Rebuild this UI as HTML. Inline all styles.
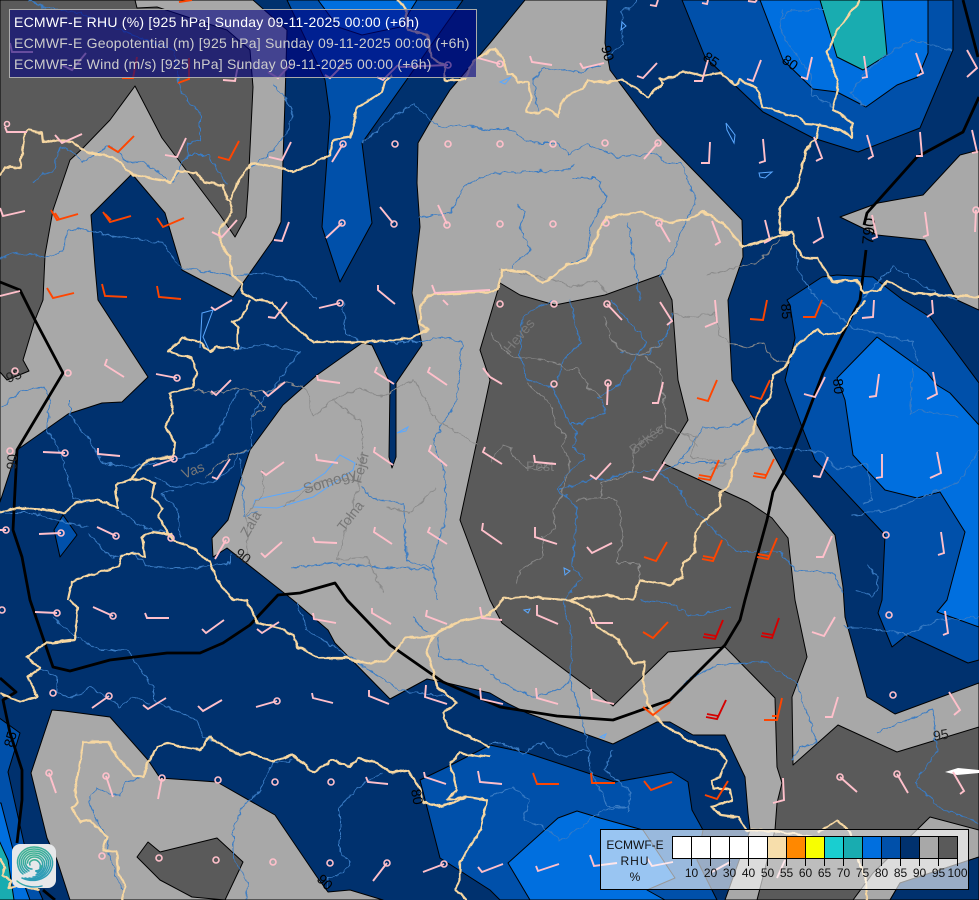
<!DOCTYPE html>
<html><head><meta charset="utf-8"><title>ECMWF-E RHU</title>
<style>
html,body{margin:0;padding:0;background:#00316e;width:979px;height:900px;overflow:hidden}
svg{display:block;position:absolute;left:0;top:0}
text{font-family:"Liberation Sans",sans-serif}
</style></head><body>
<svg width="979" height="900" viewBox="0 0 979 900" xmlns="http://www.w3.org/2000/svg">
<defs>
<filter id="w1" filterUnits="userSpaceOnUse" x="0" y="0" width="979" height="900" color-interpolation-filters="sRGB"><feTurbulence type="fractalNoise" baseFrequency="0.14" numOctaves="2" seed="4"/><feDisplacementMap in="SourceGraphic" scale="6" xChannelSelector="R" yChannelSelector="G"/></filter>
<filter id="w2" filterUnits="userSpaceOnUse" x="0" y="0" width="979" height="900" color-interpolation-filters="sRGB"><feTurbulence type="fractalNoise" baseFrequency="0.12" numOctaves="2" seed="9"/><feDisplacementMap in="SourceGraphic" scale="4" xChannelSelector="R" yChannelSelector="G"/></filter>
<linearGradient id="lg" x1="0" y1="0" x2="0.3" y2="1"><stop offset="0" stop-color="#3fb38e"/><stop offset="1" stop-color="#2d9cb6"/></linearGradient>
</defs>
<rect width="979" height="900" fill="#00316e"/>
<!-- shaded regions -->
<g stroke="#000" stroke-width="1" stroke-linejoin="round">
<polygon fill="#a8a8a8" points="0,502 17,450 68,414 102,403 122,402 148,377 98,300 95,267 91,215 132,174 165,213 182,270 233,297 273,240 281,222 285,100 287,30 253,0 0,0"/>
<polygon fill="#5a5a5a" points="0,0 135,0 137,8 157,7 227,30 250,50 253,87 248,190 246,217 235,237 220,215 162,138 135,86 110,120 83,148 70,160 53,210 45,255 43,300 35,320 23,360 29,371 7,380 0,372"/>
<polygon fill="#a8a8a8" points="525,0 607,0 605,43 610,70 657,133 742,220 743,257 728,300 732,380 753,417 783,472 835,535 843,587 845,617 867,697 895,714 979,683 979,740 790,780 775,900 725,900 750,830 748,813 745,777 725,735 693,735 670,722 657,722 613,744 527,713 507,703 490,693 447,683 427,679 390,699 335,643 328,630 293,600 227,548 213,557 212,538 228,520 240,480 250,450 283,405 317,375 362,343 372,345 390,383 389,457 392,468 396,457 396,383 422,345 412,293 420,227 417,183 418,143 433,117 450,90 490,43"/>
<polygon fill="#5a5a5a" points="500,283 520,295 555,305 605,295 660,275 672,300 678,380 688,420 662,463 748,502 772,518 788,538 795,600 807,657 792,697 793,765 838,725 897,752 979,727 979,900 757,900 775,830 777,803 782,783 777,767 775,698 725,647 668,652 613,706 502,623 490,600 460,520 490,380 480,350"/>
<polygon fill="#a8a8a8" points="930,817 979,830 979,857 900,883 890,900 853,900 873,873"/>
<polygon fill="#00316e" points="979,857 900,883 890,900 979,900"/>
<polygon fill="#a8a8a8" points="840,217 878,203 923,195 960,155 979,150 979,310 957,300 925,240 877,235"/>
<polygon fill="#a8a8a8" points="52,710 64,711 110,717 148,760 160,778 217,782 275,815 317,877 328,892 350,890 383,900 70,900 57,860 47,838 31,773"/>
<polygon fill="#5a5a5a" points="137,857 148,842 160,852 217,838 243,862 225,900 192,897 160,880"/>
<polygon fill="#0050aa" points="63,515 77,535 60,557 54,530"/>
<polygon fill="#0050aa" points="287,0 325,80 330,117 322,227 340,282 372,223 362,143 463,0"/>
<polygon fill="#006fdf" points="318,0 338,27 362,35 400,27 417,0"/>
<polygon fill="#0050aa" points="682,0 705,57 763,112 813,138 858,152 920,128 953,50 953,0"/>
<polygon fill="#006fdf" points="760,0 783,60 813,89 837,92 866,107 897,85 918,77 928,53 928,0"/>
<polygon fill="#19acb0" points="820,0 837,57 863,70 887,55 882,0"/>
<polygon fill="#0050aa" points="787,300 822,277 837,275 873,277 903,300 930,317 979,383 979,660 968,663 907,635 892,647 878,613 882,600 885,535 815,460 802,427 785,380 795,338 790,305"/>
<polygon fill="#006fdf" points="837,378 877,337 927,373 937,385 950,393 979,425 979,627 937,612 947,600 965,532 940,492 917,498 885,490 853,455 845,400"/>
<polygon fill="#0050aa" points="490,745 527,753 615,782 672,772 688,782 692,810 703,830 697,860 717,900 500,900 490,890 440,858 420,780 447,767"/>
<polygon fill="#006fdf" points="508,863 558,818 577,811 600,818 643,830 675,878 647,890 665,900 530,900"/>
<polygon fill="#0050aa" points="-2,717 20,733 8,772 30,870 43,900 -2,900"/>
<polygon fill="#006fdf" points="-2,803 1,803 17,865 30,900 -2,900"/>
<polygon fill="#19acb0" points="-2,838 8,860 14,900 -2,900"/>
</g>
<polygon fill="#fff" points="945,772 958,768 979,770 979,773 957,775"/>
<!-- rivers -->
<g fill="none" stroke="#3a7cc4" stroke-width="1" stroke-linejoin="round" filter="url(#w1)">
<polyline points="0,258 15,253 45,257 63,252 67,233 77,228 117,237 163,243 180,268 230,275 267,273 300,283 317,300"/>
<polyline points="32,183 43,172 53,173 60,147 70,150 83,162 110,145 130,163 143,162 173,182 187,155 208,155 227,185"/>
<polyline points="28,0 43,7 80,13 127,33 173,50 180,87 188,100 200,113 200,140 188,143 187,157"/>
<polyline points="273,83 293,110 287,133 267,157 250,167"/>
<polyline points="362,143 390,120 413,103 425,115 440,127 460,125 490,130 507,128 525,140 540,143 560,143 568,155 587,144 618,157 657,153 667,163 680,163 697,200 690,213 670,257 660,277"/>
<polyline points="417,217 450,213 463,187 490,173 527,172 570,170 573,163"/>
<polyline points="573,178 595,178 607,197 590,227 587,257 567,265"/>
<polyline points="517,205 525,213 520,227 530,250 510,267"/>
<polyline points="628,223 637,277 640,300"/>
<polyline points="638,0 622,13 623,43 607,57"/>
<polyline points="538,110 533,80 543,68 583,72 600,65"/>
<polyline points="952,50 912,40 883,57 862,77 850,93 866,107"/>
<polyline points="783,10 780,27 787,43 810,73 812,95 833,107"/>
<polyline points="823,10 790,10 782,20"/>
<polyline points="863,297 893,267 930,290 957,300"/>
<polyline points="797,247 797,270 818,300"/>
<polyline points="3,407 20,390 43,387 50,400 47,430 58,447 65,467 73,497 93,503"/>
<polyline points="70,400 70,415 87,437 103,463 132,467 177,460 213,443 233,400 238,390"/>
<polyline points="233,350 267,345 300,352 277,383 260,403 252,415 252,447"/>
<polyline points="343,300 345,333 362,342 420,342 443,337 462,343 457,400 433,440 443,467 447,513 433,560 437,600"/>
<polyline points="155,477 170,487 213,482 230,470 240,453 250,450"/>
<polyline points="240,460 245,517 257,510"/>
<polyline points="290,568 333,563 377,567 430,570"/>
<polyline points="360,487 377,500 403,503 407,560 433,570"/>
<polyline points="117,510 143,527 167,533"/>
<polyline points="87,533 110,557 133,553 150,567 200,568 230,563 230,553"/>
<polyline points="0,513 33,513 57,520 87,527"/>
<polyline points="173,490 160,493 178,510 180,537"/>
<polyline points="552,300 522,317 520,357 527,380 553,387 563,410 570,423 580,423 605,413 603,400 597,397 620,385 637,355 647,343 610,300"/>
<polyline points="570,300 580,343 563,360 557,380"/>
<polyline points="620,352 647,355 667,335 672,313"/>
<polyline points="570,423 577,433 573,447 585,458 568,473 558,490 577,507 572,567 582,577 565,600"/>
<polyline points="592,478 560,490"/>
<polyline points="592,478 607,480 623,473 665,470 680,463 723,463 737,452 760,450"/>
<polyline points="677,465 703,428 730,427 752,417"/>
<polyline points="660,473 677,487 690,507 707,523 737,552 780,552 795,570 833,573 843,593"/>
<polyline points="740,450 780,448 823,452 837,470 867,463 872,500 862,503"/>
<polyline points="853,515 890,510 957,483 979,450"/>
<polyline points="913,367 910,413 920,410 957,417"/>
<polyline points="820,300 853,328 913,342 918,362"/>
<polyline points="867,565 878,577 877,590 872,597 857,590"/>
<polyline points="490,675 513,688 535,697 562,688 570,680"/>
<polyline points="563,600 572,637 570,680 577,703 587,740 590,770 608,807 628,807"/>
<polyline points="613,750 605,770 630,792 628,813"/>
<polyline points="640,600 670,603 693,617 730,607"/>
<polyline points="677,693 687,680 717,665 763,662 797,683 817,743 800,747 792,760"/>
<polyline points="877,732 933,710 937,750 915,782 938,807 979,823"/>
<polyline points="843,627 883,630 907,635 937,620 979,617"/>
<polyline points="490,797 513,787 530,800 523,820 543,827 560,840 577,830 603,810 628,807"/>
<polyline points="490,743 503,743 523,753 543,742 560,757 587,750"/>
<polyline points="53,617 73,635 100,650 127,650 153,687 153,700 197,720 203,737 213,740"/>
<polyline points="40,668 57,677 57,693 70,698 90,688 107,697 120,707 135,697 150,703"/>
<polyline points="143,777 125,782 120,797 97,788 88,800 100,827 108,840 107,850 117,877 123,890"/>
<polyline points="293,760 273,763 260,790 243,807 233,830 233,857 248,883 245,900"/>
<polyline points="383,773 357,788 340,807 340,853 350,863 343,873 328,877 327,890"/>
<polyline points="297,603 307,630 350,657 400,690 447,697"/>
<polyline points="412,617 427,633"/>
<polyline points="437,637 440,657 467,663 490,670"/>
</g>
<!-- lakes -->
<g fill="none" stroke="#5aa8ff" stroke-width="1">
<polygon points="255,500 267,497 300,490 325,473 340,455 355,463 353,470 313,497 277,508 253,507"/>
<polyline points="200,348 202,313 213,310 203,337 210,352"/>
<polygon points="726,123 735,135 734,143 727,130"/>
<polygon points="759,173 772,172 765,178 760,177"/>
<polygon points="500,82 511,77 505,84"/>
<polygon points="622,22 626,26 621,30"/>
<polygon points="564,568 570,571 565,575"/>
<polygon points="524,610 530,609 528,613"/>
<polygon points="600,737 606,734 604,738"/>
<polygon points="397,433 408,427 406,431"/>
</g>
<!-- admin boundaries -->
<g fill="none" stroke="#8a8a8a" stroke-width="1" stroke-linejoin="round" filter="url(#w1)">
<polyline points="193,390 213,393 237,388 267,392 283,383 307,388 313,417 333,400 362,423 362,450"/>
<polyline points="250,392 265,408 253,415"/>
<polyline points="333,400 360,388 380,397 413,380 437,420 477,445"/>
<polyline points="247,450 230,455 205,477"/>
<polyline points="263,470 263,493 247,513 248,563"/>
<polyline points="283,507 323,480 360,480 363,453"/>
<polyline points="360,480 343,540 337,560 367,557 383,593"/>
<polyline points="437,487 410,513 387,507"/>
<polyline points="490,333 510,357 540,360 555,363 567,370 577,367 588,387 603,397"/>
<polyline points="605,317 612,340 623,352 640,355 663,343"/>
<polyline points="645,357 660,370 667,427 690,437 697,447"/>
<polyline points="527,383 553,407 555,425 567,437 562,447 570,463 568,477 560,497 553,510 555,530 543,537 543,557 520,570 517,583"/>
<polyline points="490,463 503,445 510,447 515,460 533,470 553,463"/>
<polyline points="577,500 600,497 618,500 623,537 617,563 640,563 640,580"/>
<polyline points="600,497 602,483 633,473"/>
<polyline points="633,473 633,460 635,447 663,427"/>
<polyline points="673,313 690,317 715,313 720,337 730,343 743,348 763,343 773,360 787,363"/>
<polyline points="682,433 697,437 690,457 727,463 710,470"/>
<polyline points="707,275 757,263 780,240"/>
<polyline points="500,270 540,277 562,283 573,287 597,280 607,293"/>
</g>
<!-- region names -->
<g fill="#777" font-size="14">
<text transform="translate(305,494) rotate(-17)" font-size="15">Somogy</text>
<text transform="translate(361,484) rotate(-75)">Fejér</text>
<text transform="translate(344,532) rotate(-52)">Tolna</text>
<text transform="translate(248,538) rotate(-60)">Zala</text>
<text transform="translate(184,479) rotate(-22)">Vas</text>
<text transform="translate(634,455) rotate(-38)" fill="#7a7a7a">Békés</text>
<text transform="translate(526,471)" fill="#7a7a7a">Pest</text>
<text transform="translate(510,354) rotate(-50)" fill="#7a7a7a">Heves</text>
</g>
<!-- thick geopotential lines -->
<g fill="none" stroke="#000" stroke-width="2.8" stroke-linejoin="round">
<polyline points="979,97 963,132 917,157 867,213 864,225"/>
<polyline points="866,250 860,300 823,373 802,428 785,470 773,492 767,520 745,600 740,620 725,645 670,700 613,720 557,716 500,707 443,682 390,645 347,600 335,583 300,593 278,595 250,625 223,643 200,653 167,653 110,660 70,671 53,667 30,600 22,557 13,530 17,450 63,373 35,320 20,290 0,282"/>
<polyline points="0,678 16,692 3,700 10,733 22,770 22,800 17,843"/>
<polyline points="43,890 55,900"/>
<polyline points="963,0 978,57"/>
</g>
<!-- borders -->
<g fill="none" stroke="#f6d7a2" stroke-width="2.2" stroke-linejoin="round" filter="url(#w2)">
<polyline points="0,175 5,167 20,168 25,133 28,130 42,133 43,143 55,140 72,142 88,153 113,157 133,175 170,182 178,171 197,173 203,182 223,185 227,200 230,202 232,213 220,230 220,243 230,257 232,275 242,283 242,293 257,300 272,302 287,320 313,342 350,342 367,342 413,338 428,330 420,323 420,307 428,295 490,292 497,290 503,270 527,272 543,283 567,265 587,260 598,233 607,217 640,212 657,218 670,223 687,220 703,212 723,223 743,247 792,232 780,233 780,207 798,187 802,163 808,147 815,140 820,125"/>
<polyline points="230,200 238,182 252,163 283,168 292,172 315,163 330,155 333,140 350,137 355,120 357,107 382,92 385,82 392,75"/>
<polyline points="397,0 405,7 408,30 427,35 432,58 445,65 445,80 465,80 473,62 490,50 495,48 502,58 507,74 513,74 518,82 528,82 531,100 526,113 538,114 547,108 558,117 562,102 568,95 583,88 587,80 607,83 622,79 648,97 663,83 660,78 673,78 683,71 703,76 720,73 735,85 740,80 757,88 763,107 783,113 800,118 805,124 820,125 840,130 852,137 852,123 837,112 833,110 838,90 835,73 827,52 838,30 860,0"/>
<polyline points="792,232 795,243 803,258 818,258 832,282 857,280 863,293 880,290 887,280 910,293 979,297"/>
<polyline points="865,300 857,310 840,333 823,335 817,330 800,342 790,357 785,367 773,375 770,397 757,413 753,433 737,457 728,487 720,493 720,507 703,522 695,533 695,553 683,563 682,577 670,585 640,580 633,600 620,598 607,595 567,600 523,597 503,598 490,615 455,623 430,637 407,638 387,660 367,663 347,658 320,658 297,647 293,635 280,628 257,623 247,600 233,600 217,580 210,562 188,545 172,540 158,517 163,508 152,497 155,483 143,478 130,480 115,485 118,508 100,500 77,502 63,513 50,510 17,508 0,513"/>
<polyline points="130,480 147,460 173,457 175,443 165,427 173,413 170,393 192,387 197,372 192,358 168,352 182,338 200,342 210,352 217,347 238,348 238,328 233,322 242,317 250,300"/>
<polyline points="570,600 590,610 597,627 618,640 633,663 645,662 643,680 647,703 663,725 680,735 697,745 717,750 727,760 720,777 712,780 713,788 730,790 732,800 712,807 720,815 738,817 747,830 783,832 818,838"/>
<polyline points="818,833 837,820 850,832 866,883 867,900"/>
<polyline points="68,600 72,582 90,575 118,567 122,555 132,553 145,557 142,537 153,532 172,535"/>
<polyline points="70,600 78,608 75,640 47,643 27,657 33,663 40,668 28,677 37,697 20,702 0,693"/>
<polyline points="210,735 200,750 167,743 157,747 148,763 143,777 133,775 117,757 108,742 83,742 80,763 75,790 78,802 72,808 80,822 90,820 107,837 103,850 117,852 118,872 125,885 122,900"/>
<polyline points="210,735 213,740 240,755 250,752 273,762 293,755 313,772 333,760 350,767 358,758 377,763 390,773 408,770 420,790 423,802 443,807 467,797 487,800 480,830 460,863 460,880 455,890 467,900"/>
<polyline points="490,747 460,733 447,727 443,713 457,703 447,695 437,687 427,650 433,637"/>
<polyline points="490,757 460,753 450,763 457,790 447,800 467,797"/>
<polyline points="0,858 6,868 3,875 11,880 8,888 22,886 40,890"/>
</g>
<!-- contour labels -->
<g fill="#000" font-size="14">
<text transform="translate(601,47) rotate(75)">90</text>
<text transform="translate(702,59) rotate(35)">85</text>
<text transform="translate(781,62) rotate(35)">80</text>
<text transform="translate(873,245) rotate(-85)" font-size="16">790</text>
<text transform="translate(781,304) rotate(85)">85</text>
<text transform="translate(833,379) rotate(85)">80</text>
<text transform="translate(8,383) rotate(-20)" fill="#222">95</text>
<text transform="translate(16,470) rotate(-85)" fill="#222">90</text>
<text transform="translate(234,555) rotate(38)" fill="#222">90</text>
<text transform="translate(934,741) rotate(-10)" fill="#222">95</text>
<text transform="translate(13,748) rotate(-75)">85</text>
<text transform="translate(411,790) rotate(80)">80</text>
<text transform="translate(316,880) rotate(45)">90</text>
</g>
<!-- wind barbs pink -->
<path fill="none" stroke="#ffc0cb" stroke-width="1.9" d="M0 296L20 291M5 127L7 132L27 132M55 135L62 143L82 134M165 155L177 157L186 138M269 157L282 160L291 142M343 144L332 162M380 207L393 223M438 205L447 224M342 223L326 238M274 240L282 241L289 222M212 232L222 237L237 220M0 208L3 216L25 211M378 285L378 290L390 300M432 285L435 293L490 290M10 43L12 52L33 52M62 65L72 70L86 53M223 80L235 81L239 60M268 72L278 78L292 63M325 75L330 78L345 63M377 77L383 80L398 65M400 67L448 65M478 58L500 64M530 56L532 62L552 65M580 63L583 68L604 63M637 76L643 78L657 63M694 81L702 81L708 60M747 79L753 81L761 60M801 77L807 79L812 57M862 78L867 77L864 56M917 76L923 73L916 53M967 77L977 68L967 50M650 5L656 6L658 0M702 3L707 4L708 0M748 1L755 2L757 0M658 143L644 159M701 163L709 163L710 142M759 163L765 161L763 139M816 161L822 158L814 137M867 135L873 156L868 159M920 132L922 156L916 156M972 130L977 152L972 153M659 223L670 242M712 221L720 242L715 245M765 220L770 240L764 243M818 217L823 237L813 243M872 215L877 237L872 239M925 212L928 235L923 237M976 210L975 232M211 307L215 310L232 300M268 317L275 318L287 302M340 303L319 308M390 300L395 304M443 300L448 305M107 359L105 365L124 377M177 378L156 374M211 391L216 395L231 380M263 391L268 396L285 382M317 375L318 380L340 383M377 367L375 372L394 384M430 367L428 372L447 385M483 368L490 377L502 384M65 453L43 452M98 448L98 454L120 456M174 459L153 466M212 477L217 479L230 459M261 471L266 475L284 462M316 454L317 460L338 463M375 447L374 452L393 465M431 445L429 451L447 466M485 447L483 452L502 464M0 530L6 530M61 533L39 534M116 536L97 527M226 540L215 559M261 553L265 557L282 542M313 537L315 542L337 543M375 527L374 532L392 544M430 527L428 532L447 544M483 523L482 530L502 544M607 304L622 320M660 302L672 321L667 325M715 300L717 322L705 327M874 300L873 317L862 318M932 300L933 313L927 317M608 383L607 405M663 382L658 403L652 403M825 377L815 397L804 394M879 374L876 396L869 397M933 372L937 394L927 399M534 455L535 462L556 464M590 475L596 479L611 463M643 477L653 480L665 462M813 476L820 477L828 457M882 454L882 477L876 478M937 452L941 473L930 478M535 527L535 537L557 544M587 547L592 553L612 543M816 557L823 557L832 536M941 532L944 553L938 555M57 613L35 612M113 616L93 607M145 613L147 618L169 618M202 629L206 633L224 620M257 629L262 633L279 622M313 613L314 619L336 623M372 608L372 613L391 624M427 610L426 616L447 624M480 607L482 618L502 620M109 696L92 708M143 705L148 709L166 698M198 706L203 711L222 700M277 701L256 707M312 693L313 698L333 703M369 690L369 696L389 704M426 685L425 697L447 704M480 688L481 699L503 704M49 773L56 793M106 776L113 797M162 778L158 799M366 777L368 782L388 784M424 772L425 777L446 784M478 771L480 782L502 784M387 863L373 881M444 864L423 872M478 867L482 872L503 864M537 605L537 615L558 624M590 617L592 623L613 623M812 632L824 636L835 617M945 611L948 633L943 635M949 692L960 710L954 715M838 697L832 717L825 717M536 688L537 698L558 704M591 689L592 699L614 704M840 777L857 792M897 774L908 793M953 772L964 791L960 794M783 778L784 800L773 803M590 855L594 866L617 863M536 866L538 871L559 864M647 858L652 866L673 862M712 872L730 862M777 878L785 860"/>
<g fill="none" stroke="#ffc0cb" stroke-width="1.6">
<circle cx="7" cy="124" r="2.5"/><circle cx="343" cy="144" r="3"/><circle cx="395" cy="144" r="3"/><circle cx="448" cy="144" r="3"/><circle cx="394" cy="224" r="3"/><circle cx="447" cy="225" r="3"/><circle cx="342" cy="223" r="3"/><circle cx="448" cy="65" r="3"/><circle cx="500" cy="64" r="3"/><circle cx="500" cy="144" r="3"/><circle cx="553" cy="144" r="3"/><circle cx="605" cy="143" r="3"/><circle cx="658" cy="143" r="3"/><circle cx="500" cy="224" r="3"/><circle cx="553" cy="224" r="3"/><circle cx="606" cy="223" r="3"/><circle cx="659" cy="223" r="3"/><circle cx="976" cy="210" r="3"/><circle cx="340" cy="303" r="3"/><circle cx="68" cy="373" r="3"/><circle cx="15" cy="371" r="3"/><circle cx="177" cy="378" r="3"/><circle cx="10" cy="451" r="3"/><circle cx="65" cy="453" r="3"/><circle cx="174" cy="459" r="3"/><circle cx="6" cy="530" r="3"/><circle cx="61" cy="533" r="3"/><circle cx="116" cy="536" r="3"/><circle cx="226" cy="540" r="3"/><circle cx="171" cy="538" r="3"/><circle cx="500" cy="304" r="3"/><circle cx="554" cy="304" r="3"/><circle cx="607" cy="304" r="3"/><circle cx="554" cy="384" r="3"/><circle cx="608" cy="383" r="3"/><circle cx="886" cy="535" r="3"/><circle cx="2" cy="610" r="3"/><circle cx="57" cy="613" r="3"/><circle cx="113" cy="616" r="3"/><circle cx="53" cy="693" r="3"/><circle cx="109" cy="696" r="3"/><circle cx="277" cy="701" r="3"/><circle cx="49" cy="773" r="3"/><circle cx="106" cy="776" r="3"/><circle cx="162" cy="778" r="3"/><circle cx="218" cy="780" r="3"/><circle cx="275" cy="782" r="3"/><circle cx="331" cy="782" r="3"/><circle cx="102" cy="856" r="3"/><circle cx="159" cy="858" r="3"/><circle cx="216" cy="860" r="3"/><circle cx="273" cy="862" r="3"/><circle cx="330" cy="863" r="3"/><circle cx="387" cy="863" r="3"/><circle cx="444" cy="864" r="3"/><circle cx="889" cy="615" r="3"/><circle cx="893" cy="695" r="3"/><circle cx="840" cy="777" r="3"/><circle cx="897" cy="774" r="3"/>
</g>
<!-- orange barbs -->
<path fill="none" stroke="#ff4500" stroke-width="1.9" d="M108 146L118 152L134 136M218 157L229 160L239 141M51 210L57 220L78 214M55 213L59 219M103 212L110 222L131 216M105 214L111 220M157 218L163 227L184 218M47 288L53 298L74 293M102 284L105 296L127 297M157 286L159 297L181 299M122 78L133 78L137 57M178 83L189 79L189 58M179 2L192 0M767 300L763 320L750 319M822 300L815 317L803 317M717 380L708 401L697 398M770 380L761 399L750 396M698 478L710 480L719 460M699 475L711 477M753 476L765 478L774 459M754 473L766 475M644 557L656 561L667 542M702 559L713 561L722 540M703 556L714 558M757 557L768 559L777 538M758 554L769 556M643 632L653 638L668 622M643 707L653 715L670 702M764 720L777 720L782 698M772 716L778 716M533 773L537 784L559 784M591 773L592 783L615 783M644 781L651 790L672 782M705 795L717 799L728 781"/>
<path fill="none" stroke="#d40000" stroke-width="1.9" d="M703 637L715 639L723 620M704 634L716 636M761 636L772 638L779 618M762 633L773 635M706 717L717 719L726 700M707 714L718 716"/>
<!-- legend -->
<rect x="600.5" y="829.5" width="368" height="60" fill="rgba(255,255,255,.6)" stroke="#000" stroke-width="1"/>
<g stroke="#000" stroke-width="1">
<rect x="672.5" y="836.5" width="19" height="22" fill="#fff"/><rect x="691.5" y="836.5" width="19" height="22" fill="#fff"/><rect x="710.5" y="836.5" width="19" height="22" fill="#fff"/><rect x="729.5" y="836.5" width="19" height="22" fill="#fff"/><rect x="748.5" y="836.5" width="19" height="22" fill="#fff"/><rect x="767.5" y="836.5" width="19" height="22" fill="#f7deab"/><rect x="786.5" y="836.5" width="19" height="22" fill="#ff8800"/><rect x="805.5" y="836.5" width="19" height="22" fill="#f8ff00"/><rect x="824.5" y="836.5" width="19" height="22" fill="#19ced0"/><rect x="843.5" y="836.5" width="19" height="22" fill="#19acb0"/><rect x="862.5" y="836.5" width="19" height="22" fill="#006fdf"/><rect x="881.5" y="836.5" width="19" height="22" fill="#0050aa"/><rect x="900.5" y="836.5" width="19" height="22" fill="#00316e"/><rect x="919.5" y="836.5" width="19" height="22" fill="#a8a8a8"/><rect x="938.5" y="836.5" width="19" height="22" fill="#5a5a5a"/>
<path fill="none" d="M691.5 858V866M710.5 858V866M729.5 858V866M748.5 858V866M767.5 858V866M786.5 858V866M805.5 858V866M824.5 858V866M843.5 858V866M862.5 858V866M881.5 858V866M900.5 858V866M919.5 858V866M938.5 858V866M957.5 858V866"/>
</g>
<g font-size="12" fill="#111" text-anchor="middle">
<text x="635" y="849">ECMWF-E</text><text x="635" y="865" letter-spacing="1">RHU</text><text x="635" y="881">%</text>
<text x="691.5" y="877">10</text><text x="710.5" y="877">20</text><text x="729.5" y="877">30</text><text x="748.5" y="877">40</text><text x="767.5" y="877">50</text><text x="786.5" y="877">55</text><text x="805.5" y="877">60</text><text x="824.5" y="877">65</text><text x="843.5" y="877">70</text><text x="862.5" y="877">75</text><text x="881.5" y="877">80</text><text x="900.5" y="877">85</text><text x="919.5" y="877">90</text><text x="938.5" y="877">95</text><text x="957.5" y="877">100</text>
</g>
<!-- logo -->
<rect x="12" y="844" width="44" height="44" rx="8" fill="#e6e8ea"/>
<g fill="none" stroke="url(#lg)" stroke-linecap="round" stroke-width="1.5">
<path d="M22 878C36 884 50 878 52.5 865C53.5 855 45 847 34 847C24 847 17 855 17.5 863C18 868 20 872 23 874"/>
<path d="M25 878C37 882 48 876 50.5 865C51.5 856 44 849 34 849C25 849 19 856 19.5 863C20 868 22 871 25 873"/>
<path d="M29 878C38 880 46 875 48.5 865C49.5 857 43 851 34 851C26 851 21 857 21.5 863C22 868 24 870 27 872"/>
<path d="M33 877C40 877 45 872 46.5 865C47.5 858 42 853 34 853C27 853 23 858 23.5 863C24 867 26 869 29 871"/>
<path d="M36 875C41 874 44 870 44.5 865C45 859 40 855 34 855C29 855 25 859 25.5 863C26 867 29 869 32 869"/>
<path d="M37 873C40 872 42.5 869 42.5 865C43 860 39 857 34.5 857C30 857 27.5 860 27.5 863"/>
<path d="M40 868C41.5 863 37 859 33 860C30 861 29 863 30 865"/>
<path d="M36 871C39 871 41 869 41 866" stroke-width="2"/>
<path d="M17 881C24 887 34 888 42 886" stroke-width="1.4"/>
</g>
<!-- title panel -->
<rect x="9.5" y="9.5" width="467" height="68" fill="rgba(0,0,128,.6)" stroke="#aaa" stroke-width="1"/>
<g font-size="14" letter-spacing="0.235">
<text x="14" y="27" fill="#fff">ECMWF-E RHU (%) [925 hPa] Sunday 09-11-2025 00:00 (+6h)</text>
<text x="14" y="48" fill="#ccc">ECMWF-E Geopotential (m) [925 hPa] Sunday 09-11-2025 00:00 (+6h)</text>
<text x="14" y="69" fill="#ccc">ECMWF-E Wind (m/s) [925 hPa] Sunday 09-11-2025 00:00 (+6h)</text>
</g>
</svg>
</body></html>
